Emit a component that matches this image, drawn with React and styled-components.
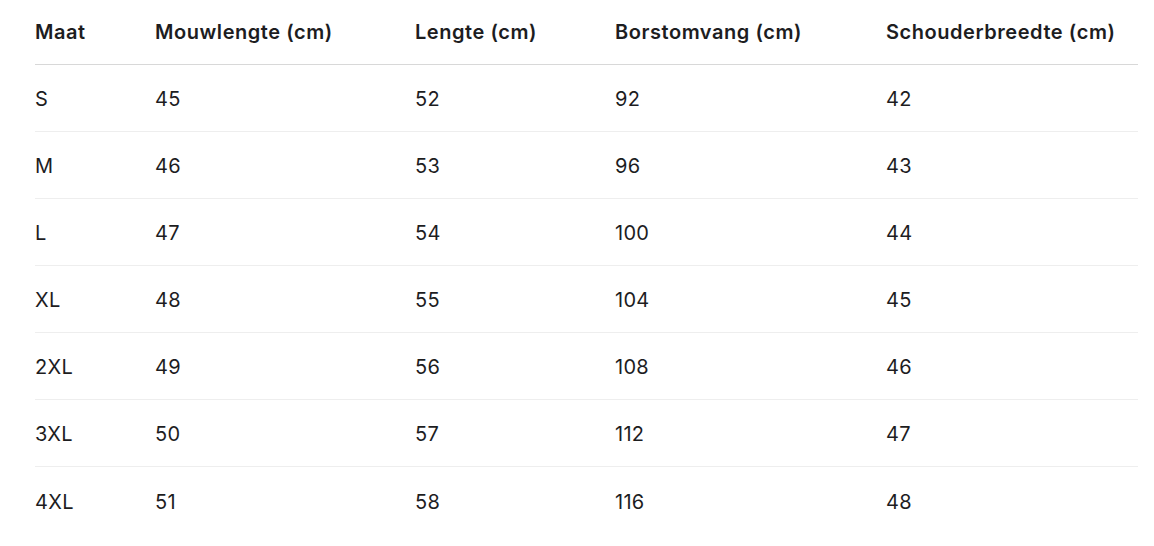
import React from "react";
import styled, { createGlobalStyle } from "styled-components";

const Global = createGlobalStyle`
  html, body { margin: 0; padding: 0; background: #ffffff; }
  body { font-family: Inter, "Noto Sans", "Liberation Sans", sans-serif; color: #1d1d1f; }
`;

const Page = styled.div`
  padding: 0 16px 0 35px;
`;

const Table = styled.div`
  display: grid;
  grid-template-columns: 120px 260px 200px 271px 1fr;
  width: 100%;
`;

const HeaderCell = styled.div`
  height: 65px;
  box-sizing: border-box;
  display: flex;
  align-items: center;
  font-size: 20px;
  font-weight: 600;
  letter-spacing: 0.55px;
  border-bottom: 1px solid #d8d8d8;
  white-space: nowrap;
`;

const Cell = styled.div`
  height: 67px;
  box-sizing: border-box;
  padding-top: 2px;
  display: flex;
  align-items: center;
  font-size: 20px;
  font-weight: 400;
  letter-spacing: 0.3px;
  border-bottom: ${(p) => (p.$last ? "none" : "1px solid #eeeeee")};
`;

const headers = ["Maat", "Mouwlengte (cm)", "Lengte (cm)", "Borstomvang (cm)", "Schouderbreedte (cm)"];
const rows = [
  ["S", "45", "52", "92", "42"],
  ["M", "46", "53", "96", "43"],
  ["L", "47", "54", "100", "44"],
  ["XL", "48", "55", "104", "45"],
  ["2XL", "49", "56", "108", "46"],
  ["3XL", "50", "57", "112", "47"],
  ["4XL", "51", "58", "116", "48"],
];

export default function App() {
  return (
    <>
      <Global />
      <Page>
        <Table>
          {headers.map((h) => (
            <HeaderCell key={h}>{h}</HeaderCell>
          ))}
          {rows.map((r, i) =>
            r.map((c, j) => (
              <Cell key={i + "-" + j} $last={i === rows.length - 1}>
                {c}
              </Cell>
            ))
          )}
        </Table>
      </Page>
    </>
  );
}
